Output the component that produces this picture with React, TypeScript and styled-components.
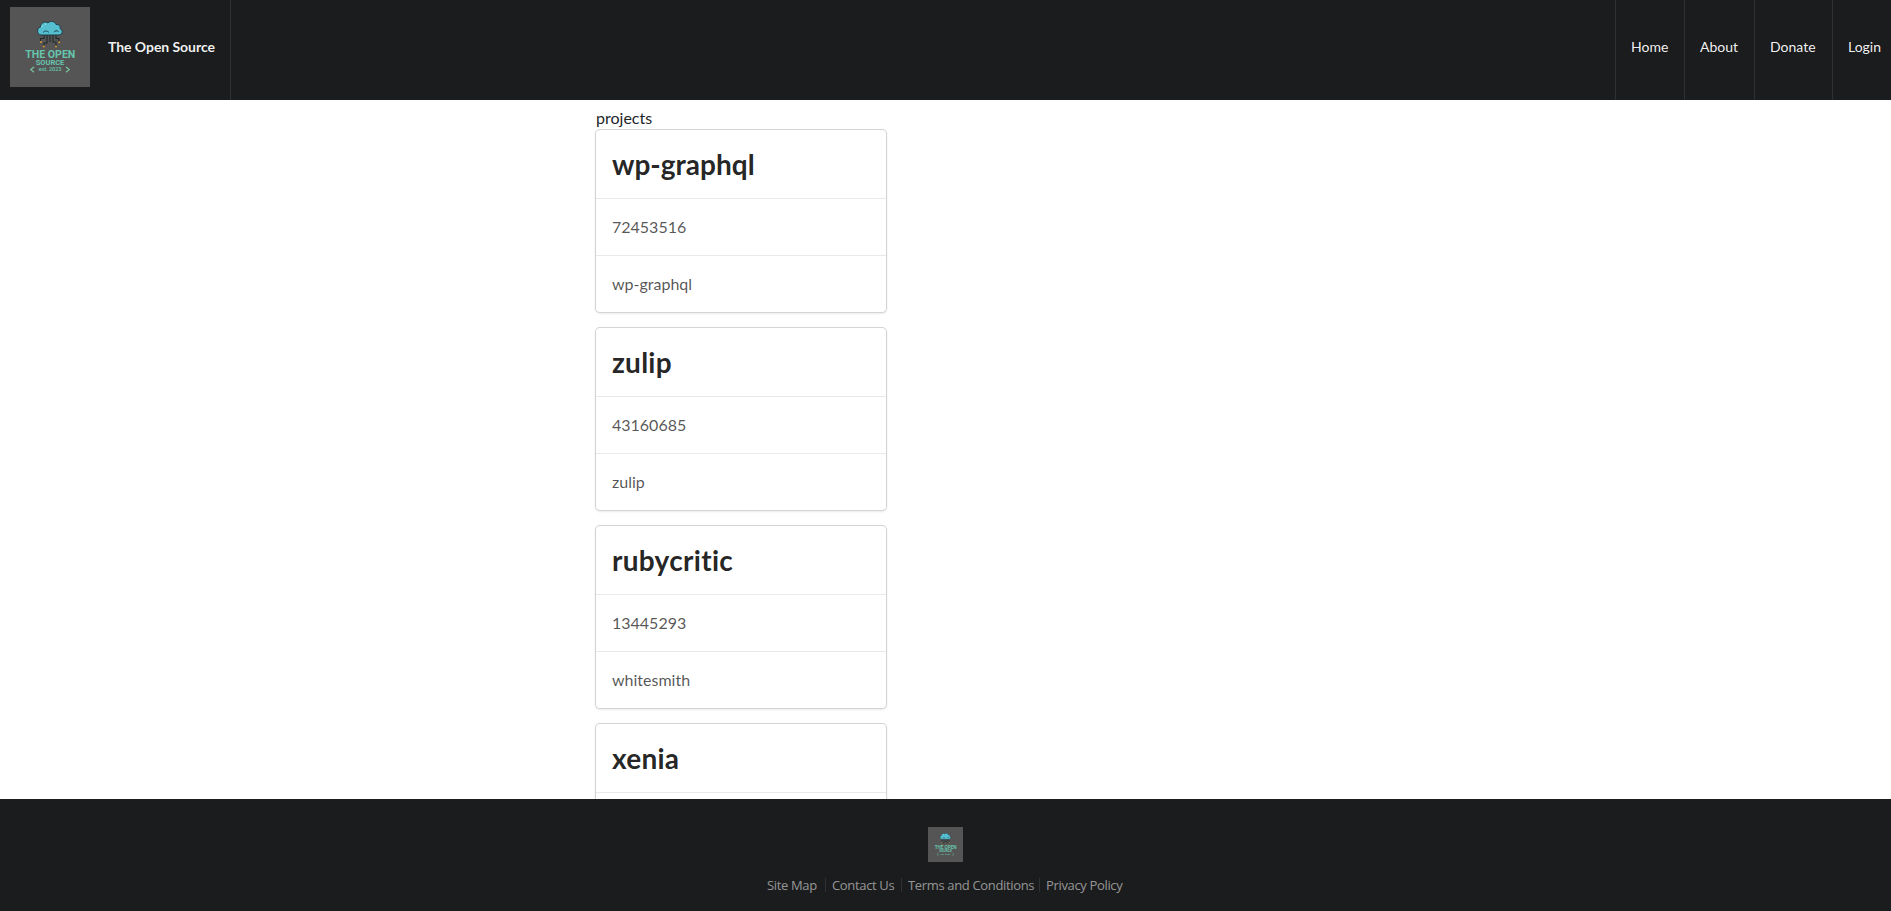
import React from "react";
import styled, { createGlobalStyle } from "styled-components";

const GlobalStyle = createGlobalStyle`
  *, *::before, *::after { box-sizing: border-box; }
  body {
    margin: 0;
    overflow: hidden;
    background: #fff;
    color: #212529;
    font-family: Lato, "Liberation Sans", sans-serif;
    font-size: 16px;
    font-variant-ligatures: none;
    line-height: 24px;
  }
`;

const Page = styled.div`
  display: flex;
  flex-direction: column;
  height: 100vh;
`;

const Header = styled.header`
  display: flex;
  justify-content: space-between;
  flex: 0 0 100px;
  background: #1b1c1d;
  font-size: 14px;
  line-height: 14px;
`;

const Brand = styled.a`
  display: flex;
  width: 231px;
  padding: 7px 0 0 10px;
  gap: 18px;
  border-right: 1px solid #2f3031;
  color: rgba(255, 255, 255, 0.95);
  font-weight: 700;
`;

const BrandName = styled.span`
  padding-top: 33px;
  letter-spacing: -0.05px;
  white-space: nowrap;
`;

const Nav = styled.nav`
  display: flex;
`;

const NavItem = styled.a<{ $width: number }>`
  width: ${(p) => p.$width}px;
  padding: 40px 0 0 15px;
  border-left: 1px solid #2f3031;
  color: rgba(255, 255, 255, 0.95);
`;

const Main = styled.main`
  flex: 1;
  min-height: 0;
  overflow: hidden;
  padding: 6px 0 0 596px;
`;

const Card = styled.article`
  width: 290px;
  margin-bottom: 16px;
  border-radius: 4px;
  background: #fff;
  box-shadow: 0 1px 3px 0 #d4d4d5, 0 0 0 1px #d4d4d5;
`;

const CardTitle = styled.h1<{ $tracking: number }>`
  margin: 0;
  padding: 16px;
  color: rgba(0, 0, 0, 0.87);
  font-size: 28px;
  font-weight: 700;
  letter-spacing: ${(p) => p.$tracking}px;
  line-height: 36px;
`;

const CardRow = styled.div`
  padding: 16px;
  border-top: 1px solid rgba(34, 36, 38, 0.1);
  color: rgba(0, 0, 0, 0.68);
`;

const Footer = styled.footer`
  display: flex;
  flex-direction: column;
  align-items: center;
  flex: 0 0 112px;
  padding-top: 28px;
  background: #1b1c1d;
`;

const FooterLinks = styled.div`
  display: flex;
  margin-top: 16px;
  font-family: "Open Sans", "Noto Sans", sans-serif;
  font-size: 13px;
  letter-spacing: -0.34px;
  line-height: 14px;
`;

const FooterLink = styled.a<{ $width: number }>`
  width: ${(p) => p.$width}px;
  color: rgba(255, 255, 255, 0.54);
  white-space: nowrap;

  & + & {
    padding-left: 6px;
    border-left: 1px solid #303132;
  }
`;

const LogoSvg = styled.svg`
  display: block;
  flex: none;
`;

const Logo = ({ size }: { size: number }) => (
  <LogoSvg width={size} height={size} viewBox="0 0 80 80">
    <rect width="80" height="80" fill="#555555" />
    <g fill="none" stroke="#22282a" strokeWidth="1.1">
      <path d="M34 28v3.500h-3.500V34M37 28v8h-3v3M40 28v7M43 28v7h3v4M46 28v3.500h3V35" />
    </g>
    <g fill="#d99a35">
      <circle cx="31" cy="35" r="1" />
      <circle cx="33.800" cy="39.500" r="1" />
      <circle cx="46" cy="39.500" r="1" />
      <circle cx="49.200" cy="35.300" r="1" />
    </g>
    <path
      d="M31 28c-4.200-.6-4.800-6.800-.5-8 0-4.200 4.500-6.100 7.400-4.200 2.700-2.500 7.200-1.400 8.200 1.700 3.200-.2 4.700 2.100 4 4.100 3.100 1.300 2.900 6-1.100 6.400Z"
      fill="#55bfd0"
      stroke="#203b45"
      strokeWidth="1"
    />
    <path d="M31.500 20l1.500-1.500M35 17.600l1-.8" stroke="#b6f0f3" strokeWidth="1" fill="none" />
    <path d="M33 25.500c2-2 4-2 6 0M44 25.200c1-1.800 3-1.800 4.500-.7" fill="none" stroke="#1e424e" strokeWidth="1" />
    <g fill="#67c5ae" fontFamily="Roboto, sans-serif" fontWeight="700" textAnchor="middle">
      <text x="40.300" y="51" fontSize="10.800" textLength="50" lengthAdjust="spacingAndGlyphs">THE OPEN</text>
      <text x="40" y="57.700" fontSize="7.900" textLength="28.500" lengthAdjust="spacingAndGlyphs">SOURCE</text>
      <text x="40" y="64.300" fontSize="4.900" fontWeight="500" textLength="22.500" lengthAdjust="spacingAndGlyphs">est. 2023</text>
    </g>
    <path d="M24 60l-3.200 2.600 3.200 2.600M56 60l3.200 2.600-3.200 2.600" fill="none" stroke="#78c69f" strokeWidth="1.200" />
  </LogoSvg>
);

const navItems = [
  { label: "Home", width: 69 },
  { label: "About", width: 70 },
  { label: "Donate", width: 78 },
  { label: "Login", width: 59 },
];

const footerLinks = [
  { label: "Site Map", width: 58 },
  { label: "Contact Us", width: 76 },
  { label: "Terms and Conditions", width: 138 },
  { label: "Privacy Policy", width: 85 },
];

const projects = [
  { name: "wp-graphql", id: "72453516", owner: "wp-graphql", tracking: 0 },
  { name: "zulip", id: "43160685", owner: "zulip", tracking: 0.25 },
  { name: "rubycritic", id: "13445293", owner: "whitesmith", tracking: 0.3 },
  { name: "xenia", id: "", owner: "", tracking: 0.25 },
];

export default function App() {
  return (
    <Page>
      <GlobalStyle />
      <Header>
        <Brand>
          <Logo size={80} />
          <BrandName>The Open Source</BrandName>
        </Brand>
        <Nav>
          {navItems.map((item) => (
            <NavItem key={item.label} $width={item.width}>{item.label}</NavItem>
          ))}
        </Nav>
      </Header>
      <Main>
        projects
        {projects.map((project) => (
          <Card key={project.name}>
            <CardTitle $tracking={project.tracking}>{project.name}</CardTitle>
            <CardRow>{project.id}</CardRow>
            <CardRow>{project.owner}</CardRow>
          </Card>
        ))}
      </Main>
      <Footer>
        <Logo size={35} />
        <FooterLinks>
          {footerLinks.map((link) => (
            <FooterLink key={link.label} $width={link.width}>{link.label}</FooterLink>
          ))}
        </FooterLinks>
      </Footer>
    </Page>
  );
}
